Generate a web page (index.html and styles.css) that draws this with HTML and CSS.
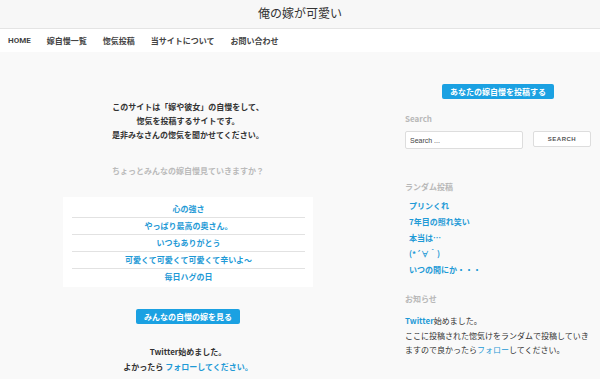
FILE: index.html
```html
<!DOCTYPE html>
<html lang="ja">
<head>
    <meta charset="UTF-8">
    <meta name="viewport" content="width=device-width, initial-scale=1.0">
    <title>俺の嫁が可愛い</title>
    <link rel="stylesheet" href="styles.css">
</head>
<body>
    <header class="site-header">
        <h1 class="site-title">俺の嫁が可愛い</h1>
    </header>
    <nav class="main-nav">
        <a class="nav-item home" href="#">HOME</a>
        <a class="nav-item" href="#">嫁自慢一覧</a>
        <a class="nav-item" href="#">惚気投稿</a>
        <a class="nav-item" href="#">当サイトについて</a>
        <a class="nav-item" href="#">お問い合わせ</a>
    </nav>
    <div class="content">
        <main class="main-col">
            <p class="intro">
                このサイトは「嫁や彼女」の自慢をして、<br>
                惚気を投稿するサイトです。<br>
                是非みなさんの惚気を聞かせてください。
            </p>
            <p class="prompt">ちょっとみんなの嫁自慢見ていきますか？</p>
            <ul class="pick-list">
                <li><a href="#">心の強さ</a></li>
                <li><a href="#">やっぱり最高の奥さん。</a></li>
                <li><a href="#">いつもありがとう</a></li>
                <li><a href="#">可愛くて可愛くて可愛くて辛いよ～</a></li>
                <li><a href="#">毎日ハグの日</a></li>
            </ul>
            <div class="btn-row">
                <a class="blue-btn" href="#">みんなの自慢の嫁を見る</a>
            </div>
            <p class="follow">
                Twitter始めました。<br>
                よかったら <a href="#">フォローしてください。</a>
            </p>
        </main>
        <aside class="sidebar">
            <div class="btn-row">
                <a class="blue-btn" href="#">あなたの嫁自慢を投稿する</a>
            </div>
            <h3 class="widget-title search-title">Search</h3>
            <form class="search-form">
                <input class="search-input" type="text" placeholder="Search ...">
                <button class="search-btn" type="button">SEARCH</button>
            </form>
            <h3 class="widget-title random-title">ランダム投稿</h3>
            <ul class="random-list">
                <li><a href="#">プリンくれ</a></li>
                <li><a href="#">7年目の照れ笑い</a></li>
                <li><a href="#">本当は…</a></li>
                <li><a href="#">(*´∀｀)</a></li>
                <li><a href="#">いつの間にか・・・</a></li>
            </ul>
            <h3 class="widget-title notice-title">お知らせ</h3>
            <p class="notice">
                <a href="#">Twitter</a>始めました。<br>
                ここに投稿された惚気けをランダムで投稿していきますので良かったら<a class="plain" href="#">フォロー</a>してください。
            </p>
        </aside>
    </div>
</body>
</html>
```

FILE: styles.css
```css
body {
    margin: 0;
    background-color: #f9f9f9;
    color: #333;
    font-family: "Noto Sans CJK JP", "Noto Sans", sans-serif;
    font-size: 8px;
}

a {
    color: #1f9ad6;
    text-decoration: none;
}

ul {
    list-style: none;
    margin: 0;
    padding: 0;
}

.site-header {
    height: 28px;
    background-color: #f7f7f7;
    border-bottom: 1px solid #e4e4e4;
}

.site-title {
    margin: 0;
    text-align: center;
    font-size: 12px;
    font-weight: normal;
    line-height: 26px;
    color: #333;
}

.main-nav {
    display: flex;
    height: 23px;
    align-items: center;
    padding-left: 0;
    background-color: #fff;
}

.nav-item {
    padding: 0 8px;
    color: #444;
    font-size: 8px;
    font-weight: bold;
}

.nav-item.home {
    font-family: Roboto, sans-serif;
    font-size: 8px;
    padding-right: 8px;
}

.content {
    display: flex;
    padding-left: 63px;
}

.main-col {
    width: 250px;
    text-align: center;
}

.intro {
    margin: 48px 0 0;
    line-height: 14px;
    font-weight: bold;
}

.prompt {
    margin: 22px 0 0;
    line-height: 14px;
    color: #bbb;
    font-weight: bold;
}

.pick-list {
    margin-top: 19px;
    padding: 4px 8px 2px 9px;
    background-color: #fff;
}

.pick-list li {
    height: 16px;
    line-height: 16px;
    border-bottom: 1px solid #e2e2e2;
    font-weight: bold;
}

.pick-list li:last-child {
    border-bottom: none;
}

.btn-row {
    display: flex;
    justify-content: center;
}

.main-col .btn-row {
    margin-top: 22px;
}

.blue-btn {
    display: block;
    height: 15px;
    line-height: 15px;
    padding: 0 8px;
    border-radius: 2px;
    background-color: #1ba1e2;
    color: #fff;
    font-weight: bold;
}

.follow {
    margin: 20px 0 0;
    line-height: 15px;
    font-weight: bold;
}

.sidebar {
    width: 186px;
    margin-left: 92px;
}

.sidebar .btn-row {
    margin-top: 32px;
}

.widget-title {
    margin: 0;
    font-size: 8px;
    line-height: 14px;
    color: #b8b8b8;
    font-weight: bold;
}

.search-title {
    margin-top: 13px;
}

.search-form {
    display: flex;
    align-items: flex-start;
    margin-top: 5px;
}

.search-input {
    box-sizing: border-box;
    width: 118px;
    height: 18px;
    padding: 0 4px;
    border: 1px solid #ddd;
    border-radius: 2px;
    background: #fff;
    font-family: "Liberation Sans", sans-serif;
    font-size: 7px;
    color: #333;
}

.search-input::placeholder {
    color: #444;
}

.search-btn {
    box-sizing: border-box;
    width: 58px;
    height: 16px;
    margin-left: 10px;
    padding: 0;
    border: 1px solid #ddd;
    border-radius: 2px;
    background: #fff;
    font-family: "Liberation Sans", sans-serif;
    font-size: 6px;
    font-weight: bold;
    letter-spacing: 0.5px;
    color: #555;
}

.random-title {
    margin-top: 31px;
}

.random-list {
    margin-top: 4px;
    padding-left: 4px;
}

.random-list li {
    line-height: 16px;
    font-weight: bold;
}

.notice-title {
    margin-top: 14px;
}

.notice {
    margin: 8px 0 0;
    line-height: 14.5px;
}

.notice a {
    font-weight: bold;
}

.notice a.plain {
    font-weight: normal;
}
```
